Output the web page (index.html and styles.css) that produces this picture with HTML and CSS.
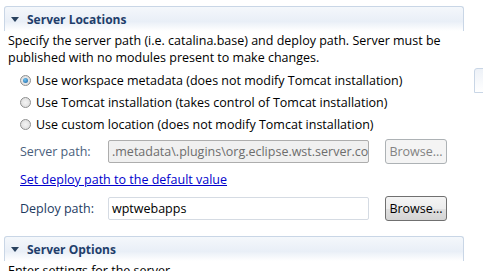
FILE: index.html
```html
<!DOCTYPE html>
<html>
<head>
    <meta charset="utf-8">
    <title>Server Locations</title>
    <link rel="stylesheet" href="styles.css">
</head>
<body>
    <div class="page">
        <div class="section">
            <div class="sec-head">
                <span class="twisty"></span>
                <span class="sec-title">Server Locations</span>
            </div>
            <p class="desc">Specify the server path (i.e. catalina.base) and deploy path. Server must be published with no modules present to make changes.</p>
            <div class="radios">
                <label class="radio"><span class="dot on"></span>Use workspace metadata (does not modify Tomcat installation)</label>
                <label class="radio"><span class="dot"></span>Use Tomcat installation (takes control of Tomcat installation)</label>
                <label class="radio"><span class="dot"></span>Use custom location (does not modify Tomcat installation)</label>
            </div>
            <div class="row first">
                <span class="lbl dim">Server path:</span>
                <span class="field off">.metadata\.plugins\org.eclipse.wst.server.co</span>
                <span class="btn off">Browse...</span>
            </div>
            <div class="linkrow"><a class="link" href="#">Set deploy path to the default value</a></div>
            <div class="row">
                <span class="lbl">Deploy path:</span>
                <span class="field">wptwebapps</span>
                <span class="btn">Browse...</span>
            </div>
        </div>
        <div class="section second">
            <div class="sec-head">
                <span class="twisty"></span>
                <span class="sec-title">Server Options</span>
            </div>
            <p class="desc">Enter settings for the server.</p>
        </div>
        <div class="side-tab"></div>
    </div>
</body>
</html>
```

FILE: styles.css
```css
* {
    margin: 0;
    padding: 0;
    box-sizing: border-box;
}
body {
    background: #fff;
    font-family: "Open Sans", "Noto Sans", sans-serif;
    font-size: 12.5px;
    color: #000;
    overflow: hidden;
}
.page {
    position: relative;
    width: 483px;
    height: 271px;
    overflow: hidden;
    padding: 6px 0 0 4px;
}
.section {
    width: 460px;
}
.sec-head {
    height: 25px;
    border: 1px solid #c9d6e6;
    border-bottom: none;
    border-radius: 3px 3px 0 0;
    background: linear-gradient(to bottom, #f4f7fb, #e9eff7 60%, #ffffff);
    display: flex;
    align-items: center;
    padding-left: 6px;
}
.twisty {
    width: 0;
    height: 0;
    border-left: 4px solid transparent;
    border-right: 4px solid transparent;
    border-top: 5px solid #29425f;
    margin-right: 8px;
}
.sec-title {
    font-weight: bold;
    font-size: 12px;
    color: #1f3e6b;
}
.desc {
    padding: 1px 0 0 4px;
    line-height: 17px;
    width: 456px;
}
.radios {
    padding: 3px 0 0 16px;
    display: flex;
    flex-direction: column;
}
.radio {
    display: flex;
    align-items: center;
    height: 22px;
}
.dot {
    width: 11px;
    height: 11px;
    border-radius: 50%;
    border: 1px solid #8e8f8f;
    background: radial-gradient(circle, #f4f4f4, #d8d8d8);
    margin-right: 5px;
    position: relative;
}
.dot.on::after {
    content: "";
    position: absolute;
    left: 2px;
    top: 2px;
    width: 5px;
    height: 5px;
    border-radius: 50%;
    background: radial-gradient(circle at 40% 35%, #6fc5f2, #1a5fa0);
}
.row {
    display: flex;
    align-items: center;
    padding-left: 16px;
    height: 24px;
}
.row.first {
    margin-top: 4px;
}
.lbl {
    width: 88px;
    color: #1d3a5f;
}
.lbl.dim {
    color: #4a607c;
}
.field {
    width: 261px;
    height: 23px;
    border: 1px solid #d5dbe3;
    border-radius: 2px;
    padding: 0 3px;
    line-height: 21px;
    white-space: nowrap;
    overflow: hidden;
}
.field.off {
    background: #f0f0f0;
    border-color: #adadad;
    color: #6d6d6d;
}
.btn {
    margin-left: 16px;
    width: 62px;
    height: 25px;
    border: 1px solid #707070;
    border-radius: 3px;
    background: linear-gradient(to bottom, #f4f4f4, #ececec 50%, #e0e0e0 51%, #d4d4d4);
    text-align: center;
    line-height: 23px;
}
.btn.off {
    border-color: #adb2b5;
    background: #f4f4f4;
    color: #838383;
}
.linkrow {
    padding: 8px 0 0 16px;
    height: 33px;
    line-height: 17px;
}
.link {
    color: #0000cc;
}
.second {
    margin-top: 16px;
}
.side-tab {
    position: absolute;
    left: 474px;
    top: 68px;
    width: 12px;
    height: 25px;
    border: 1px solid #c9d6e6;
    border-radius: 3px 0 0 0;
    background: linear-gradient(to bottom, #edf1f7, #ffffff);
}
```
